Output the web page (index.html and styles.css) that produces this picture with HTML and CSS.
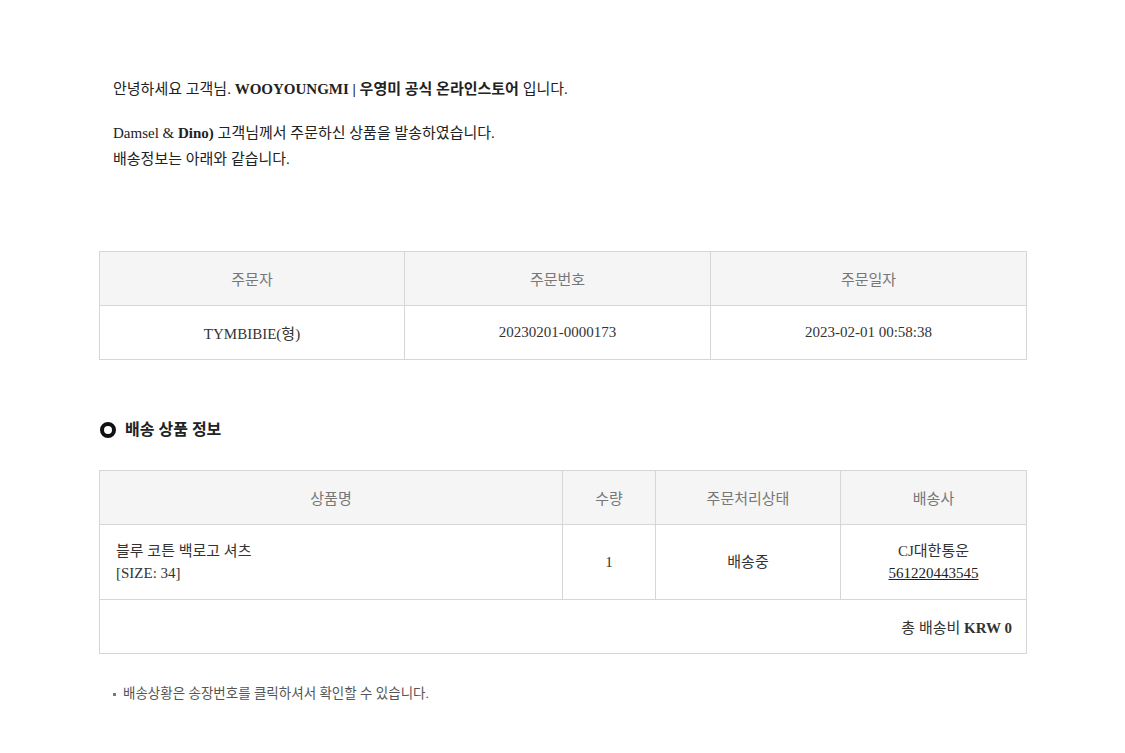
FILE: index.html
```html
<!DOCTYPE html>
<html lang="ko">
<head>
<meta charset="utf-8">
<link rel="stylesheet" href="styles.css">
</head>
<body>
<div class="page">
  <div class="intro">
    <p class="line">안녕하세요 고객님. <b>WOOYOUNGMI | 우영미 공식 온라인스토어</b> 입니다.</p>
    <p class="line gap">Damsel &amp; <b>Dino)</b> 고객님께서 주문하신 상품을 발송하였습니다.</p>
    <p class="line">배송정보는 아래와 같습니다.</p>
  </div>

  <table class="tbl order">
    <colgroup><col class="c1"><col class="c2"><col class="c3"></colgroup>
    <thead>
      <tr><th>주문자</th><th>주문번호</th><th>주문일자</th></tr>
    </thead>
    <tbody>
      <tr><td>TYMBIBIE(형)</td><td>20230201-0000173</td><td>2023-02-01 00:58:38</td></tr>
    </tbody>
  </table>

  <h2 class="section"><span class="ring"></span>배송 상품 정보</h2>

  <table class="tbl items">
    <colgroup><col class="p1"><col class="p2"><col class="p3"><col class="p4"></colgroup>
    <thead>
      <tr><th>상품명</th><th>수량</th><th>주문처리상태</th><th>배송사</th></tr>
    </thead>
    <tbody>
      <tr class="item">
        <td class="name">블루 코튼 백로고 셔츠<br>[SIZE: 34]</td>
        <td>1</td>
        <td>배송중</td>
        <td>CJ대한통운<br><a class="track" href="#">561220443545</a></td>
      </tr>
      <tr class="total">
        <td colspan="4">총 배송비 <b>KRW 0</b></td>
      </tr>
    </tbody>
  </table>

  <ul class="notes">
    <li>배송상황은 송장번호를 클릭하셔서 확인할 수 있습니다.</li>
  </ul>
</div>
</body>
</html>
```

FILE: styles.css
```css
html, body {
  margin: 0;
  padding: 0;
  background: #fff;
}
body {
  font-family: "Liberation Serif", "Noto Sans CJK KR", serif;
  font-size: 15px;
  color: #222;
}
.page {
  width: 927px;
  padding: 77px 0 0 99px;
}
.intro {
  padding-left: 14px;
}
.line {
  margin: 0;
  line-height: 24px;
}
.line b {
  font-weight: bold;
}
.gap {
  margin-top: 20px;
}
.line + .line:not(.gap) {
  margin-top: 2px;
}
.tbl {
  width: 927px;
  border-collapse: collapse;
  table-layout: fixed;
  border: 1px solid #d6d6d6;
}
.tbl th, .tbl td {
  border: 1px solid #d6d6d6;
  text-align: center;
  vertical-align: middle;
  padding: 0 16px;
}
.tbl th {
  background: #f5f5f5;
  color: #777;
  font-weight: normal;
  height: 53px;
}
.order {
  margin-top: 80px;
}
.order td {
  height: 53px;
  color: #333;
}
.c1 { width: 305px; }
.c2 { width: 306px; }
.c3 { width: 316px; }
.section {
  display: flex;
  align-items: center;
  gap: 9px;
  margin: 58px 0 28px 1px;
  font-size: 16px;
  font-weight: bold;
  color: #222;
  line-height: 24px;
}
.ring {
  width: 8px;
  height: 8px;
  border: 4px solid #111;
  border-radius: 50%;
}
.p1 { width: 463px; }
.p2 { width: 93px; }
.p3 { width: 185px; }
.p4 { width: 186px; }
.items .item td {
  height: 74px;
  line-height: 22px;
  color: #333;
}
.items td.name {
  text-align: left;
}
.track {
  color: #222;
  text-decoration: underline;
}
.items .total td {
  text-align: right;
  height: 53px;
  color: #333;
  padding-right: 14px;
}
.notes {
  list-style: none;
  margin: 30px 0 0;
  padding: 0 0 0 14px;
  font-size: 13.5px;
  color: #555;
}
.notes li {
  position: relative;
  padding-left: 10px;
  line-height: 20px;
}
.notes li::before {
  content: "";
  position: absolute;
  left: 0;
  top: 9px;
  width: 3px;
  height: 3px;
  background: #777;
}
```
